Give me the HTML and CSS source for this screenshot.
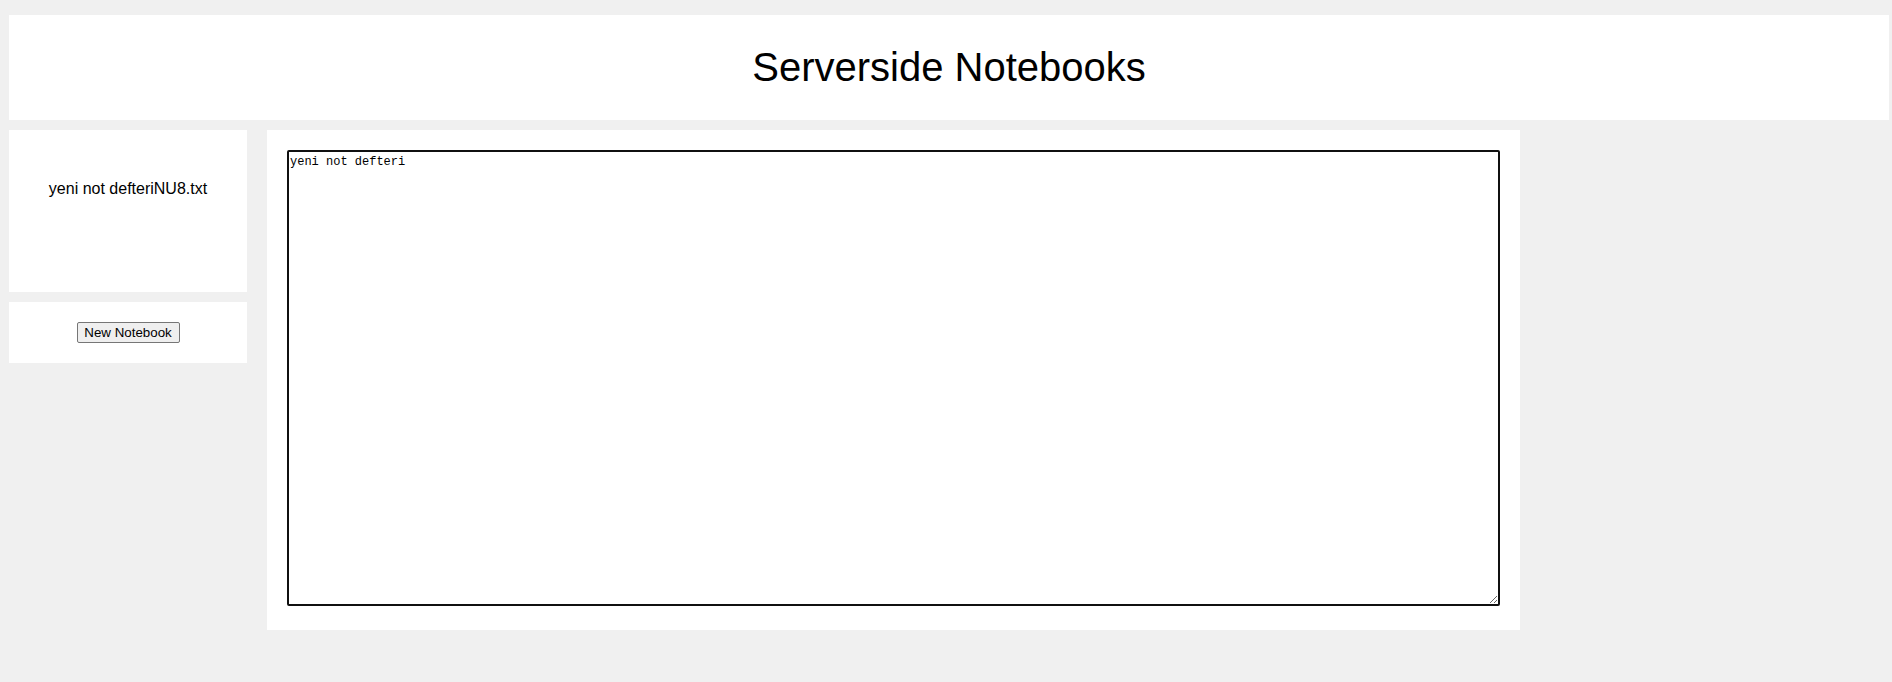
FILE: index.html
```html
<!DOCTYPE html>
<html lang="tr">
<head>
<meta charset="utf-8">
<title>Serverside Notebooks</title>
<link rel="stylesheet" href="styles.css">
</head>
<body>
<header class="header">
  <h1 class="title">Serverside Notebooks</h1>
</header>
<div class="layout">
  <aside class="sidebar">
    <div class="card files">
      <p class="file">yeni not defteriNU8.txt</p>
    </div>
    <div class="card actions">
      <button class="btn" type="button">New Notebook</button>
    </div>
  </aside>
  <main class="card editor">
    <textarea class="note" spellcheck="false">yeni not defteri</textarea>
  </main>
</div>
</body>
</html>
```
FILE: styles.css
```css
html, body {
  margin: 0;
  padding: 0;
}
body {
  background: #f0f0f0;
  font-family: "Liberation Sans", Arial, sans-serif;
  color: #000;
  padding: 15px 3px 0 9px;
}
.card {
  background: #fff;
}
.header {
  background: #fff;
  width: 1880px;
  height: 105px;
  display: flex;
  align-items: center;
  justify-content: center;
}
.title {
  margin: 0;
  font-size: 40px;
  font-weight: normal;
  line-height: 46px;
  position: relative;
  top: -1px;
}
.layout {
  display: flex;
  align-items: flex-start;
  gap: 20px;
  margin-top: 10px;
}
.sidebar {
  width: 238px;
  display: flex;
  flex-direction: column;
  gap: 10px;
}
.files {
  height: 162px;
  box-sizing: border-box;
  padding-top: 50px;
  text-align: center;
}
.file {
  margin: 0;
  font-size: 16px;
  line-height: 18px;
}
.actions {
  height: 61px;
  display: flex;
  align-items: center;
  justify-content: center;
}
.btn {
  font-family: "Liberation Sans", Arial, sans-serif;
  font-size: 13.333px;
  height: 21px;
  width: 103px;
  padding: 0 6px;
  background: #efefef;
  border: 1px solid #767676;
  border-radius: 2px;
  color: #000;
}
.editor {
  width: 1253px;
  box-sizing: border-box;
  padding: 20px 20px 24px;
}
.note {
  display: block;
  width: 100%;
  height: 456px;
  box-sizing: border-box;
  margin: 0;
  border: 2px solid #101010;
  border-radius: 2px;
  padding: 3px 1px 1px;
  font-family: "Liberation Mono", "DejaVu Sans Mono", monospace;
  font-size: 12px;
  line-height: 15px;
  color: #000;
  background: #fff;
  outline: none;
}
```
